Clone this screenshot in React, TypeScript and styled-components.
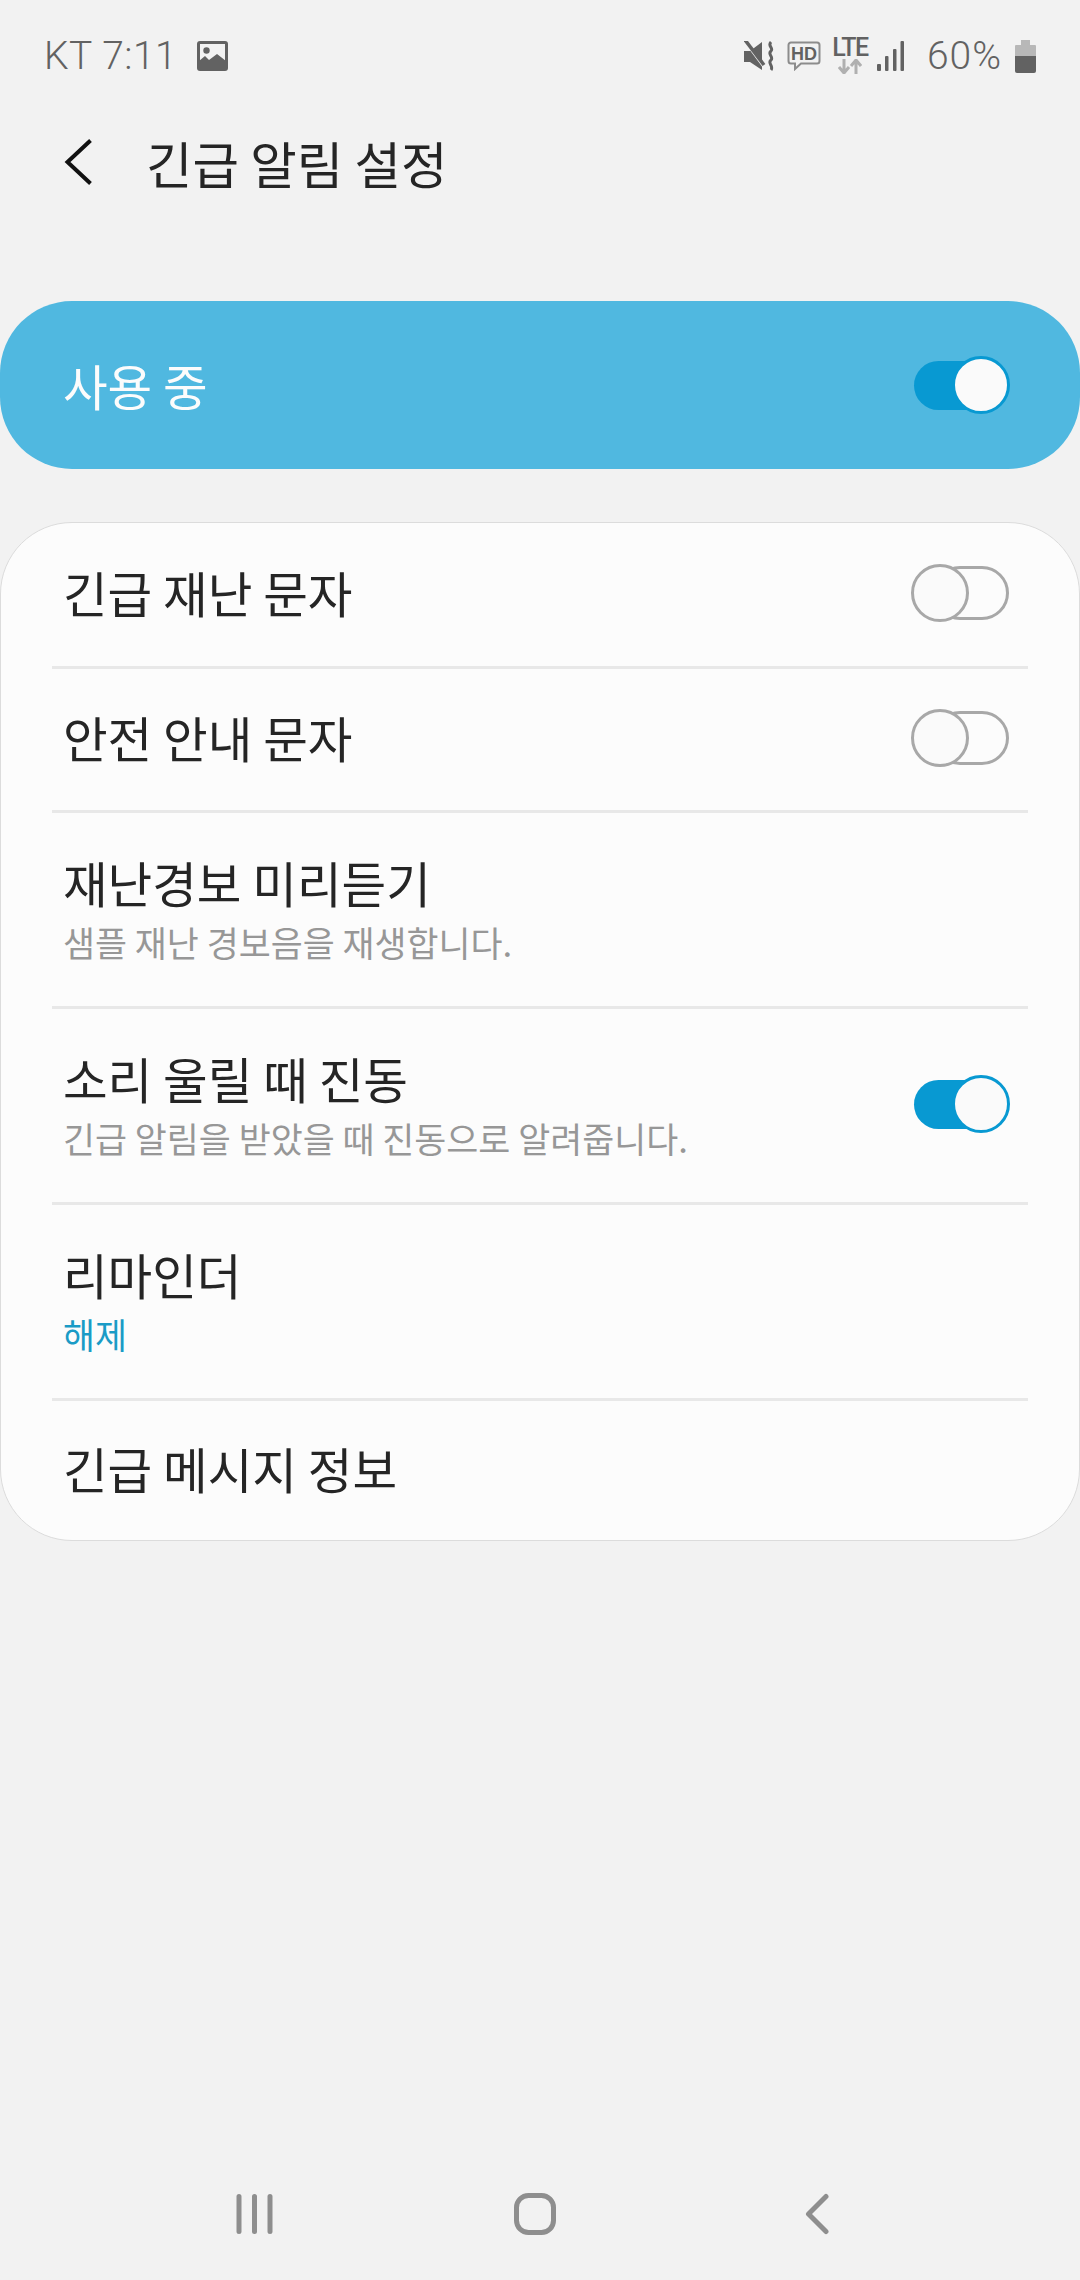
import React, { FC } from "react";
import styled, { createGlobalStyle } from "styled-components";

const KR = `"Noto Sans CJK KR", "Noto Sans", sans-serif`;

const GlobalStyle = createGlobalStyle`
  html, body {
    margin: 0;
    padding: 0;
    background: #f2f2f2;
  }
  * {
    box-sizing: border-box;
  }
`;

type RowItem = {
  title: string;
  sub?: string;
  accent?: boolean;
  toggle?: "on" | "off";
};

const rows: RowItem[] = [
  { title: "긴급 재난 문자", toggle: "off" },
  { title: "안전 안내 문자", toggle: "off" },
  { title: "재난경보 미리듣기", sub: "샘플 재난 경보음을 재생합니다." },
  { title: "소리 울릴 때 진동", sub: "긴급 알림을 받았을 때 진동으로 알려줍니다.", toggle: "on" },
  { title: "리마인더", sub: "해제", accent: true },
  { title: "긴급 메시지 정보" },
];

const Toggle: FC<{ on: boolean }> = ({ on }) => (
  <SwitchBox>
    <SwitchTrack $on={on} />
    <SwitchThumb $on={on} />
  </SwitchBox>
);

const App: FC = () => {
  return (
    <Page>
      <GlobalStyle />
      <StatusBar>
        <StatusLeft>
          <StatusText>KT 7:11</StatusText>
          <svg width="31" height="30" viewBox="0 0 31 30">
            <rect x="0" y="0" width="31" height="30" rx="3" fill="#626262" />
            <rect x="3" y="3" width="25" height="24" fill="#f2f2f2" />
            <circle cx="9.500" cy="9.500" r="3.200" fill="#626262" />
            <path d="M2 28V20L8 15L12 19L20 13L29 20V28Z" fill="#626262" />
          </svg>
        </StatusLeft>
        <StatusRight>
          <StatusIcon $gap={0}>
            <svg width="31" height="31" viewBox="0 0 31 31">
              <path d="M0 10H6L18 1V29L6 21H0Z" fill="#626262" />
              <path d="M1 0L21 27" stroke="#f2f2f2" strokeWidth="3" />
              <path d="M2 0L21 25" stroke="#626262" strokeWidth="3.500" transform="translate(-1 -1)" />
              <path d="M27 1C23 5 30 7 27 10C23 13 30 16 27 19C23 22 30 25 27 29" stroke="#626262" strokeWidth="3" fill="none" />
            </svg>
          </StatusIcon>
          <StatusIcon $gap={12}>
            <svg width="34" height="30" viewBox="0 0 34 30">
              <path d="M4 1.500H30A2.500 2.500 0 0 1 32.500 4V20A2.500 2.500 0 0 1 30 22.500H14L8 28V22.500H4A2.500 2.500 0 0 1 1.500 20V4A2.500 2.500 0 0 1 4 1.500Z" fill="none" stroke="#8c8c8c" strokeWidth="2" />
              <text x="17" y="18.500" textAnchor="middle" fontFamily="Liberation Sans" fontWeight="700" fontSize="18" fill="#626262">HD</text>
            </svg>
          </StatusIcon>
          <StatusIcon $gap={10}>
            <LteBlock>
              <LteText>LTE</LteText>
              <svg width="24" height="15" viewBox="0 0 24 15">
                <path d="M6 0V13M1 8L6 14L11 8" stroke="#b0b0b0" strokeWidth="3" fill="none" />
                <path d="M18 15V2M13 7L18 1L23 7" stroke="#b0b0b0" strokeWidth="3" fill="none" />
              </svg>
            </LteBlock>
          </StatusIcon>
          <StatusIcon $gap={8}>
            <svg width="27" height="30" viewBox="0 0 27 30">
              <rect x="0" y="23" width="4" height="7" rx="1" fill="#626262" />
              <rect x="8" y="15" width="3.500" height="15" rx="1" fill="#626262" />
              <rect x="16" y="8" width="3.500" height="22" rx="1" fill="#626262" />
              <rect x="23.500" y="0" width="3.500" height="30" rx="1" fill="#626262" />
            </svg>
          </StatusIcon>
          <BatteryText>60%</BatteryText>
          <StatusIcon $gap={13}>
            <svg width="21" height="33" viewBox="0 0 21 33">
              <path d="M6 0H15V5H20A1 1 0 0 1 21 6V16H0V6A1 1 0 0 1 1 5H6Z" fill="#b8b8b8" />
              <path d="M0 16H21V31A2 2 0 0 1 19 33H2A2 2 0 0 1 0 31Z" fill="#626262" />
            </svg>
          </StatusIcon>
        </StatusRight>
      </StatusBar>

      <Header>
        <svg width="28" height="46" viewBox="0 0 28 46">
          <path d="M26.500 1.500L3.500 23L26.500 44.500" stroke="#111" strokeWidth="4" fill="none" />
        </svg>
        <HeaderTitle>긴급 알림 설정</HeaderTitle>
      </Header>

      <Banner>
        <BannerLabel>사용 중</BannerLabel>
        <Toggle on />
      </Banner>

      <Card>
        {rows.map((row) => (
          <Row key={row.title} $tall={!!row.sub}>
            <RowText $tall={!!row.sub}>
              <RowTitle>{row.title}</RowTitle>
              {row.sub && <RowSub $accent={row.accent}>{row.sub}</RowSub>}
            </RowText>
            {row.toggle && <Toggle on={row.toggle === "on"} />}
          </Row>
        ))}
      </Card>

      <NavBar>
        <RecentsIcon width="37" height="40" viewBox="0 0 37 40">
          <path d="M3 2.500V37.500M18.500 2.500V37.500M34 2.500V37.500" stroke="#8e8e8e" strokeWidth="5" strokeLinecap="round" />
        </RecentsIcon>
        <HomeIcon width="42" height="42" viewBox="0 0 42 42">
          <rect x="2.500" y="2.500" width="37" height="37" rx="12" fill="none" stroke="#8e8e8e" strokeWidth="5" />
        </HomeIcon>
        <svg width="24" height="42" viewBox="0 0 24 42">
          <path d="M21 3.500L3.500 21L21 38.500" stroke="#8e8e8e" strokeWidth="5" fill="none" strokeLinecap="round" strokeLinejoin="round" />
        </svg>
      </NavBar>
    </Page>
  );
};

export default App;

const Page = styled.div`
  width: 1080px;
  height: 2280px;
  display: flex;
  flex-direction: column;
  background: #f2f2f2;
  font-family: ${KR};
  overflow: hidden;
`;

const StatusBar = styled.div`
  height: 112px;
  padding: 0 44px;
  display: flex;
  align-items: center;
  justify-content: space-between;
  color: #626262;
`;

const StatusLeft = styled.div`
  display: flex;
  align-items: center;
  gap: 20px;
`;

const StatusText = styled.span`
  font-family: Roboto, sans-serif;
  font-weight: 300;
  font-size: 39px;
  line-height: 1;
  letter-spacing: 0.5px;
`;

const StatusRight = styled.div`
  display: flex;
  align-items: center;
`;

const StatusIcon = styled.span<{ $gap: number }>`
  display: flex;
  margin-left: ${(p) => p.$gap}px;
`;

const LteBlock = styled.span`
  width: 38px;
  display: flex;
  flex-direction: column;
  align-items: center;
  gap: 2px;
`;

const LteText = styled.span`
  font-family: Roboto, sans-serif;
  font-weight: 500;
  font-size: 25px;
  line-height: 19px;
  letter-spacing: -1.500px;
`;

const BatteryText = styled.span`
  margin-left: 23px;
  font-family: Roboto, sans-serif;
  font-weight: 300;
  font-size: 39px;
  line-height: 1;
  letter-spacing: 1px;
`;

const Header = styled.div`
  height: 100px;
  padding-left: 64px;
  display: flex;
  align-items: center;
  gap: 54px;
`;

const HeaderTitle = styled.h1`
  margin: 0;
  font-size: 50.500px;
  font-weight: 400;
  line-height: 1;
  color: #252525;
`;

const Banner = styled.div`
  margin-top: 89px;
  height: 168px;
  padding: 0 70px 0 63px;
  display: flex;
  align-items: center;
  justify-content: space-between;
  background: #50b8e0;
  border-radius: 72px;
`;

const BannerLabel = styled.span`
  font-size: 48.500px;
  line-height: 1;
  color: #fcfcfc;
`;

const Card = styled.div`
  margin-top: 53px;
  padding: 0 51px;
  background: #fcfcfc;
  border: 1px solid #dcdcdc;
  border-radius: 72px;
`;

const Row = styled.div<{ $tall: boolean }>`
  height: ${(p) => (p.$tall ? 196 : 144)}px;
  padding: 0 18px 3px 11px;
  display: flex;
  align-items: center;
  justify-content: space-between;
  border-bottom: 3px solid #e8e8e8;

  &:first-child {
    height: 146px;
  }
  &:last-child {
    height: 139px;
    border-bottom: none;
  }
`;

const RowText = styled.div<{ $tall: boolean }>`
  display: flex;
  flex-direction: column;
  gap: 11px;
  margin-bottom: ${(p) => (p.$tall ? 0 : 3)}px;
`;

const RowTitle = styled.span`
  font-size: 48.500px;
  line-height: 56px;
  color: #252525;
`;

const RowSub = styled.span<{ $accent?: boolean }>`
  font-size: 34.800px;
  line-height: 42px;
  color: ${(p) => (p.$accent ? "#1a9bc6" : "#979797")};
`;

const SwitchBox = styled.div`
  position: relative;
  width: 99px;
  height: 58px;
  display: flex;
  align-items: center;
`;

const SwitchTrack = styled.div<{ $on: boolean }>`
  width: ${(p) => (p.$on ? 94 : 76)}px;
  height: ${(p) => (p.$on ? 49 : 54)}px;
  margin-left: ${(p) => (p.$on ? 3 : 22)}px;
  border-radius: 27px;
  background: ${(p) => (p.$on ? "#0899d2" : "transparent")};
  border: ${(p) => (p.$on ? "none" : "3.5px solid #a8a8a8")};
`;

const SwitchThumb = styled.div<{ $on: boolean }>`
  position: absolute;
  top: 0;
  left: ${(p) => (p.$on ? 41 : 0)}px;
  width: 58px;
  height: 58px;
  border-radius: 50%;
  background: #fafafa;
  border: ${(p) => (p.$on ? "3px solid #0899d2" : "3.5px solid #a8a8a8")};
`;

const NavBar = styled.div`
  margin-top: auto;
  height: 132px;
  padding-left: 236px;
  display: flex;
  align-items: center;
`;

const RecentsIcon = styled.svg`
  margin-right: 241px;
`;

const HomeIcon = styled.svg`
  margin-right: 249px;
`;
